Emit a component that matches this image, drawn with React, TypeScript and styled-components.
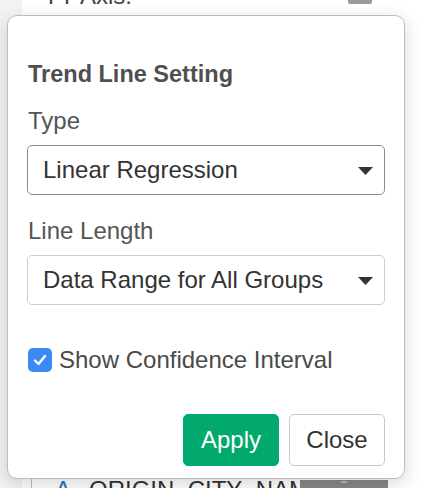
import React from "react";
import styled, { createGlobalStyle } from "styled-components";

const GlobalStyle = createGlobalStyle`
  html, body { margin: 0; padding: 0; background: #ffffff; }
  body { font-family: "Liberation Sans", Arial, sans-serif; overflow: hidden; }
  * { box-sizing: border-box; }
`;

const Page = styled.div`
  position: relative;
  width: 432px;
  height: 488px;
  overflow: hidden;
  display: flex;
  background: #ffffff;
`;

const Sidebar = styled.div`
  width: 22px;
  flex: none;
  background: #f3f3f3;
`;

const Main = styled.div`
  flex: 1;
  display: flex;
  flex-direction: column;
  background: #ffffff;
`;

const AxisRow = styled.div`
  display: flex;
  align-items: flex-start;
  height: 28px;
  margin-top: -18px;
  padding-left: 21px;
  font-size: 24px;
  line-height: 28px;
  color: #444444;
`;

const AxisToggle = styled.div`
  margin-left: auto;
  margin-right: 60px;
  margin-top: 18px;
  width: 24px;
  height: 4px;
  background: #9a9a9a;
  border-radius: 0 0 2px 2px;
`;

const Spacer = styled.div`
  flex: 1;
`;

const FieldRow = styled.div`
  display: flex;
  align-items: flex-start;
  height: 12px;
  margin-left: 9px;
  width: 357px;
  border-left: 1px solid #bdbdbd;
  padding-left: 23px;
  font-size: 24px;
  line-height: 28px;
`;

const TypeGlyph = styled.span`
  color: #1f78c8;
  margin-right: 18px;
`;

const FieldName = styled.span`
  flex: 1;
  min-width: 0;
  overflow: hidden;
  white-space: nowrap;
  color: #333333;
`;

const FieldMenu = styled.div`
  position: relative;
  width: 88px;
  height: 12px;
  margin-top: 4px;
  background: #888888;
  flex: none;
`;

const MenuMark = styled.div`
  position: absolute;
  left: 41px;
  top: 1px;
  width: 6px;
  height: 2px;
  background: #b5b5b5;
`;

const Popover = styled.div`
  position: absolute;
  left: 7px;
  top: 15px;
  width: 398px;
  height: 464px;
  background: #ffffff;
  border: 1px solid #bdbdbd;
  border-radius: 10px;
  box-shadow: 0 5px 18px rgba(0, 0, 0, 0.16);
  padding: 45px 19px 12px;
  display: flex;
  flex-direction: column;
`;

const Title = styled.div`
  font-size: 23.5px;
  line-height: 26px;
  font-weight: 700;
  color: #4f4f4f;
  padding-left: 1px;
  margin-bottom: 20px;
`;

const FormGroup = styled.div`
  display: flex;
  flex-direction: column;
  & + & {
    margin-top: 22px;
  }
`;

const Label = styled.div`
  font-size: 24px;
  line-height: 28px;
  color: #555555;
  padding-left: 1px;
  margin-bottom: 10px;
`;

const SelectBox = styled.div<{ $focused?: boolean }>`
  height: 50px;
  display: flex;
  align-items: center;
  padding: 0 11px 0 15px;
  border: 1px solid ${(p) => (p.$focused ? "#8c8c8c" : "#cccccc")};
  border-radius: 5px;
  background: #ffffff;
  font-size: 24px;
  line-height: 28px;
  color: #333333;
`;

const SelectText = styled.span`
  flex: 1;
`;

const Caret = styled.svg`
  width: 15px;
  height: 8px;
  margin-top: 2px;
  flex: none;
`;

const CheckRow = styled.label`
  display: flex;
  align-items: center;
  margin-top: 43px;
  height: 24px;
  font-size: 24px;
  line-height: 28px;
  color: #4a4a4a;
`;

const CheckBox = styled.span`
  width: 24px;
  height: 24px;
  border-radius: 5px;
  background: #3a8cf4;
  display: flex;
  align-items: center;
  justify-content: center;
  margin-left: 1px;
  margin-right: 7px;
  flex: none;
`;

const ButtonBar = styled.div`
  display: flex;
  justify-content: flex-end;
  gap: 10px;
  margin-top: 42px;
`;

const Button = styled.button<{ $primary?: boolean }>`
  height: 52px;
  padding: 0 ${(p) => (p.$primary ? "17px" : "16px")};
  min-width: ${(p) => (p.$primary ? "95px" : "96px")};
  border-radius: 5px;
  border: 1px solid ${(p) => (p.$primary ? "#02a96d" : "#c8c8c8")};
  background: ${(p) => (p.$primary ? "#02a96d" : "#ffffff")};
  color: ${(p) => (p.$primary ? "#ffffff" : "#333333")};
  font-family: "Liberation Sans", Arial, sans-serif;
  font-size: 24px;
  line-height: 28px;
  cursor: pointer;
`;

const CaretIcon = () => (
  <Caret viewBox="0 0 15 8">
    <path d="M0 0 H15 L7.5 8 Z" fill="#333333" />
  </Caret>
);

export default function App() {
  return (
    <>
      <GlobalStyle />
      <Page>
        <Sidebar />
        <Main>
          <AxisRow>
            <span>YY Axis:</span>
            <AxisToggle />
          </AxisRow>
          <Spacer />
          <FieldRow>
            <TypeGlyph>A</TypeGlyph>
            <FieldName>ORIGIN_CITY_NAME</FieldName>
            <FieldMenu>
              <MenuMark />
            </FieldMenu>
          </FieldRow>
        </Main>
        <Popover>
          <Title>Trend Line Setting</Title>
          <FormGroup>
            <Label>Type</Label>
            <SelectBox $focused>
              <SelectText>Linear Regression</SelectText>
              <CaretIcon />
            </SelectBox>
          </FormGroup>
          <FormGroup>
            <Label>Line Length</Label>
            <SelectBox>
              <SelectText>Data Range for All Groups</SelectText>
              <CaretIcon />
            </SelectBox>
          </FormGroup>
          <CheckRow>
            <CheckBox>
              <svg width="16" height="16" viewBox="0 0 16 16">
                <path
                  d="M3 8.5 L6.5 12 L13 4"
                  fill="none"
                  stroke="#ffffff"
                  strokeWidth="2.4"
                  strokeLinecap="round"
                  strokeLinejoin="round"
                />
              </svg>
            </CheckBox>
            Show Confidence Interval
          </CheckRow>
          <ButtonBar>
            <Button $primary>Apply</Button>
            <Button>Close</Button>
          </ButtonBar>
        </Popover>
      </Page>
    </>
  );
}
